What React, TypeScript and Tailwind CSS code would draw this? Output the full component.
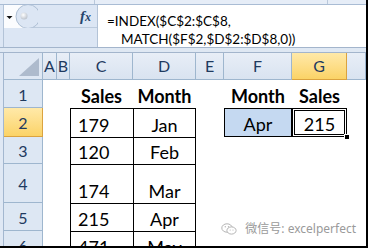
import { Fragment } from "react"

const COLS = ["A", "B", "C", "D", "E", "F", "G", ""]

type Row = {
  n: number
  c: string
  d: string
  f?: string
  g?: string
  bold?: boolean
}

const ROWS: Row[] = [
  { n: 1, c: "Sales", d: "Month", f: "Month", g: "Sales", bold: true },
  { n: 2, c: "179", d: "Jan", f: "Apr", g: "215" },
  { n: 3, c: "120", d: "Feb" },
  { n: 4, c: "174", d: "Mar" },
  { n: 5, c: "215", d: "Apr" },
  { n: 6, c: "471", d: "May" },
]

const cell = "flex items-end pb-[3px] text-[18px] leading-[18px] text-black whitespace-nowrap"
const head = "flex items-center justify-center border-r border-b border-[#9eb6ce] text-[16px] text-[#1f3a5f]"
const strip = "bg-[#dfe8f4] border-r border-[#a3b7cf]"

function FormulaBar() {
  return (
    <div className="flex flex-col bg-[#dce6f4]">
      <div className="flex h-[5px] border-b border-[#a9bcd4] bg-[#e6edf7]">
        <div className="w-[95px] border-r border-[#b9c8db]" />
        <div className="w-[233px] border-r border-[#b9c8db]" />
      </div>
      <div className="flex h-[42px]">
        <div className="ml-[3px] flex w-[94px] flex-col border-l border-[#b3c3d7]">
          <div className="flex h-[23px] items-center border-b border-[#bccbdd]">
            <svg width="34" height="23" viewBox="0 0 34 23" className="shrink-0">
              <defs>
                <radialGradient id="dot" cx="40%" cy="35%" r="70%">
                  <stop offset="0" stopColor="#ffffff" />
                  <stop offset="1" stopColor="#b9c0ca" />
                </radialGradient>
              </defs>
              <rect x="0" y="0" width="22" height="23" fill="#fbfcfe" />
              <circle cx="24" cy="11.5" r="12" fill="#dce6f4" stroke="#aebfd4" />
              <circle cx="20" cy="11" r="3.5" fill="url(#dot)" />
              <polygon points="2.5,11 8.5,11 5.5,14" fill="#111" />
            </svg>
            <div className="flex-1" />
            <span className="pr-[6px] font-['Liberation_Serif',serif] text-[15px] font-bold italic leading-none text-[#26466d]">
              f<span className="text-[12px]">x</span>
            </span>
          </div>
          <div className="flex-1" />
        </div>
        <div className="flex-1 border-l border-[#b3c3d7] bg-white pt-[7px] text-[13.5px] leading-[18px] text-black">
          <div className="pl-[9px]">=INDEX($C$2:$C$8,</div>
          <div className="pl-[23px]">MATCH($F$2,$D$2:$D$8,0))</div>
        </div>
      </div>
      <div className="h-[6px] border-y border-[#a3b5cc] bg-[#dfe8f3]" />
    </div>
  )
}

function Grid() {
  return (
    <div className="grid h-[193px] grid-cols-[4px_39px_14px_13px_63px_63px_28px_68px_55px_1fr] grid-rows-[27px_28px_29px_27px_39px_28px_28px] overflow-hidden bg-white">
      <div className={strip} />
      <div className="relative border-r border-b border-[#9eb6ce] bg-[#dfe8f4]">
        <svg width="38" height="26" className="absolute inset-0">
          <polygon points="15,23 35,23 35,5" fill="#aebbcd" />
        </svg>
      </div>
      {COLS.map((c, i) =>
        c === "G" ? (
          <div
            key={i}
            className="flex items-center justify-center border-r border-b border-[#dba33f] bg-linear-to-b from-[#ffe9a8] to-[#fbd366] text-[16px] text-[#1f3a5f]"
          >
            {c}
          </div>
        ) : (
          <div key={i} className={`${head} bg-linear-to-b from-[#e8eef7] to-[#d9e3f0]`}>
            {c}
          </div>
        )
      )}

      {ROWS.map((r) => {
        const table = !r.bold
        return (
          <Fragment key={r.n}>
            <div className={strip} />
            <div
              className={
                r.n === 2
                  ? "flex items-center justify-center border-r border-b border-[#dba33f] bg-linear-to-b from-[#ffe9a8] to-[#fbd366] pt-[2px] text-[16px] text-[#1f3a5f]"
                  : `${head} bg-[#dde7f3] pt-[2px]`
              }
            >
              {r.n}
            </div>
            <div />
            <div />
            <div
              className={`${cell} ${
                table ? "justify-start border-l border-t border-black pl-[7px]" : "justify-center font-bold"
              }`}
            >
              {r.c}
            </div>
            <div
              className={`${cell} justify-center ${
                table ? "border-l border-r border-t border-black" : "font-bold"
              }`}
            >
              {r.d}
            </div>
            <div />
            {r.n === 1 ? (
              <div className={`${cell} justify-center font-bold`}>{r.f}</div>
            ) : r.n === 2 ? (
              <div className={`${cell} justify-center border border-black bg-[#c5d9f1]`}>{r.f}</div>
            ) : (
              <div />
            )}
            {r.n === 1 ? (
              <div className={`${cell} justify-center font-bold`}>{r.g}</div>
            ) : r.n === 2 ? (
              <div className={`${cell} relative justify-center overflow-visible border border-black`}>
                <div className="pointer-events-none absolute inset-[1px] border border-black" />
                {r.g}
                <div className="absolute -right-[4px] -bottom-[4px] z-10 h-[6px] w-[6px] border border-white bg-black" />
              </div>
            ) : (
              <div />
            )}
            <div />
          </Fragment>
        )
      })}
    </div>
  )
}

export default function App() {
  return (
    <div className="relative h-[248px] w-[368px] overflow-hidden border-r-2 border-b-2 border-black bg-white font-['Lato','Noto_Sans',sans-serif]">
      <FormulaBar />
      <Grid />
      <div className="absolute right-[10px] bottom-[11px] flex items-center gap-[8px] text-[12px] leading-none text-[#9a9a9a]">
        <svg width="16" height="12" viewBox="0 0 16 12">
          <ellipse cx="6" cy="5" rx="5.2" ry="4.2" fill="none" stroke="#b5b5b5" strokeWidth="1" />
          <ellipse cx="10.5" cy="7.5" rx="4.6" ry="3.6" fill="white" stroke="#b5b5b5" strokeWidth="1" />
          <circle cx="4.3" cy="3.8" r="0.7" fill="#b5b5b5" />
          <circle cx="7.5" cy="3.8" r="0.7" fill="#b5b5b5" />
          <circle cx="9.2" cy="7" r="0.6" fill="#b5b5b5" />
          <circle cx="12" cy="7" r="0.6" fill="#b5b5b5" />
        </svg>
        <span className="font-['Noto_Sans','Noto_Sans_CJK_SC',sans-serif]">微信号: excelperfect</span>
      </div>
    </div>
  )
}
